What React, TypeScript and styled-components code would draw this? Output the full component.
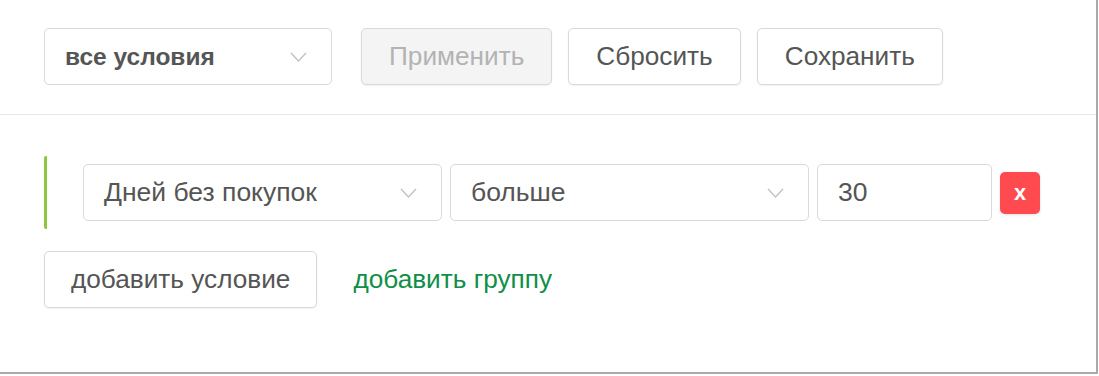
import { ReactElement } from "react";
import styled, { createGlobalStyle } from "styled-components";

const GlobalStyle = createGlobalStyle`
  html, body {
    margin: 0;
    padding: 0;
    background: #ffffff;
  }
  body {
    font-family: "Liberation Sans", Arial, sans-serif;
  }
`;

const Frame = styled.div`
  width: 1098px;
  height: 374px;
  box-sizing: border-box;
  border-right: 2px solid #a9a9a9;
  border-bottom: 2px solid #a9a9a9;
  background: #fff;
`;

const Toolbar = styled.div`
  display: flex;
  align-items: center;
  gap: 16px;
  padding: 28px 44px 29px;
  border-bottom: 1px solid #e6e6e6;
`;

const Body = styled.div`
  padding: 41px 44px 0;
  display: flex;
  flex-direction: column;
  gap: 22px;
`;

const Group = styled.div`
  display: flex;
  align-items: center;
  gap: 8px;
  padding: 8px 0 8px 36px;
  border-left: 3px solid #8dc63f;
  border-radius: 2px;
`;

const SelectBox = styled.div<{ $width: number; $bold?: boolean }>`
  width: ${(p) => p.$width}px;
  height: 57px;
  box-sizing: border-box;
  display: flex;
  align-items: center;
  justify-content: space-between;
  padding: 0 24px 0 20px;
  border: 1px solid #d9d9d9;
  border-radius: 5px;
  background: #fff;
  color: #555;
  font-size: ${(p) => (p.$bold ? 24.5 : 26.5)}px;
  font-weight: ${(p) => (p.$bold ? 700 : 400)};
  margin-right: ${(p) => (p.$bold ? 13 : 0)}px;
`;

const Chevron = () => (
  <svg width="17" height="10" viewBox="0 0 17 10" fill="none">
    <path d="M1 1l7.5 8L16 1" stroke="#c2c2c2" strokeWidth="1.4" />
  </svg>
);

const Button = styled.button<{ $disabled?: boolean; $pad?: number }>`
  height: 57px;
  box-sizing: border-box;
  padding: 0 ${(p) => p.$pad ?? 27}px;
  border: 1px solid #d9d9d9;
  border-radius: 5px;
  background: ${(p) => (p.$disabled ? "#f4f4f4" : "#fff")};
  color: ${(p) => (p.$disabled ? "#b3b3b3" : "#555")};
  font-family: inherit;
  font-size: 26.2px;
  box-shadow: 0 1px 2px rgba(0, 0, 0, 0.06);
  cursor: ${(p) => (p.$disabled ? "default" : "pointer")};
`;

const Input = styled.div`
  width: 175px;
  height: 57px;
  box-sizing: border-box;
  display: flex;
  align-items: center;
  padding: 0 20px;
  border: 1px solid #d9d9d9;
  border-radius: 5px;
  color: #555;
  font-size: 26.5px;
`;

const RemoveButton = styled.button`
  width: 40px;
  height: 42px;
  border: none;
  border-radius: 5px;
  background: #ff4b4f;
  color: #fff;
  font-family: inherit;
  font-size: 22px;
  font-weight: 700;
  padding: 0;
  box-shadow: 0 1px 3px rgba(0, 0, 0, 0.12);
`;

const Actions = styled.div`
  display: flex;
  align-items: center;
  gap: 36px;
`;

const Link = styled.span`
  color: #0f8f47;
  font-size: 26.2px;
  cursor: pointer;
`;

export const App = (): ReactElement => {
  return (
    <>
      <GlobalStyle />
      <Frame>
        <Toolbar>
          <SelectBox $width={288} $bold>
            все условия
            <Chevron />
          </SelectBox>
          <Button $disabled>Применить</Button>
          <Button>Сбросить</Button>
          <Button>Сохранить</Button>
        </Toolbar>
        <Body>
          <Group>
            <SelectBox $width={359}>
              Дней без покупок
              <Chevron />
            </SelectBox>
            <SelectBox $width={359}>
              больше
              <Chevron />
            </SelectBox>
            <Input>30</Input>
            <RemoveButton>x</RemoveButton>
          </Group>
          <Actions>
            <Button $pad={26}>добавить условие</Button>
            <Link>добавить группу</Link>
          </Actions>
        </Body>
      </Frame>
    </>
  );
};

export default App;
